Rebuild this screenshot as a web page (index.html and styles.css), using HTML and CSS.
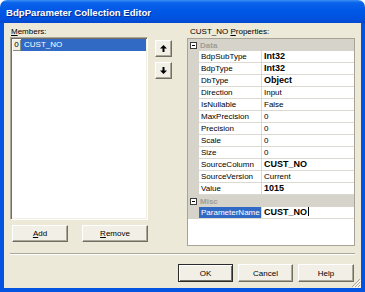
FILE: index.html
```html
<!DOCTYPE html>
<html lang="en">
  <head>
    <meta charset="UTF-8" />
    <meta name="viewport" content="width=device-width, initial-scale=1" />
    <title>BdpParameter Collection Editor</title>
    <link rel="stylesheet" href="styles.css">
  </head>
  <body>
    <div class="window">
      <div class="titlebar">BdpParameter Collection Editor</div>

      <div class="client">
        <div class="main">
          <!-- Members list -->
          <div class="members">
            <label class="caption"><u>M</u>embers:</label>
            <div class="listbox">
              <div class="list-item">
                <span class="idx">0</span>
                <span class="item-text">CUST_NO</span>
              </div>
            </div>
            <div class="list-buttons">
              <button class="btn btn-add"><u>A</u>dd</button>
              <button class="btn btn-remove"><u>R</u>emove</button>
            </div>
          </div>

          <!-- Move up / down -->
          <div class="move-buttons">
            <button class="btn btn-arrow">
              <svg width="7" height="7" viewBox="0 0 7 7">
                <path d="M3.5 0 L7 3.5 L4.5 3.5 L4.5 7 L2.5 7 L2.5 3.5 L0 3.5 Z" fill="#000" />
              </svg>
            </button>
            <button class="btn btn-arrow">
              <svg width="7" height="7" viewBox="0 0 7 7">
                <path d="M3.5 7 L7 3.5 L4.5 3.5 L4.5 0 L2.5 0 L2.5 3.5 L0 3.5 Z" fill="#000" />
              </svg>
            </button>
          </div>

          <!-- Property grid -->
          <div class="props">
            <label class="caption props-caption">CUST_NO <u>P</u>roperties:</label>
            <div class="propgrid">
              <div class="category"><span class="toggle"></span><span class="cat-name">Data</span></div>
              <div class="prop"><span class="margin"></span><span class="name">BdpSubType</span><span class="value bold">Int32</span></div>
              <div class="prop"><span class="margin"></span><span class="name">BdpType</span><span class="value bold">Int32</span></div>
              <div class="prop"><span class="margin"></span><span class="name">DbType</span><span class="value bold">Object</span></div>
              <div class="prop"><span class="margin"></span><span class="name">Direction</span><span class="value">Input</span></div>
              <div class="prop"><span class="margin"></span><span class="name">IsNullable</span><span class="value">False</span></div>
              <div class="prop"><span class="margin"></span><span class="name">MaxPrecision</span><span class="value">0</span></div>
              <div class="prop"><span class="margin"></span><span class="name">Precision</span><span class="value">0</span></div>
              <div class="prop"><span class="margin"></span><span class="name">Scale</span><span class="value">0</span></div>
              <div class="prop"><span class="margin"></span><span class="name">Size</span><span class="value">0</span></div>
              <div class="prop"><span class="margin"></span><span class="name">SourceColumn</span><span class="value bold">CUST_NO</span></div>
              <div class="prop"><span class="margin"></span><span class="name">SourceVersion</span><span class="value">Current</span></div>
              <div class="prop"><span class="margin"></span><span class="name">Value</span><span class="value bold">1015</span></div>
              <div class="category"><span class="toggle"></span><span class="cat-name">Misc</span></div>
              <div class="prop"><span class="margin"></span><span class="name selected">ParameterName</span><span class="value bold">CUST_NO<span class="caret"></span></span></div>
            </div>
          </div>
        </div>

        <div class="separator"></div>

        <div class="dialog-buttons">
          <button class="btn btn-default">OK</button>
          <button class="btn">Cancel</button>
          <button class="btn btn-help">Help</button>
        </div>

        <!-- Resize grip -->
        <svg class="grip" width="10" height="10" viewBox="0 0 10 10">
          <path d="M9 1 L1 9 M9 4 L4 9 M9 7 L7 9" stroke="#ACA899" stroke-width="1" />
          <path d="M10 2 L2 10 M10 5 L5 10 M10 8 L8 10" stroke="#fff" stroke-width="1" />
        </svg>
      </div>
    </div>
  </body>
</html>
```

FILE: styles.css
```css
/* Global */
body {
  margin: 0;
  background-color: #ffffff;
  font-family: "Liberation Sans", Arial, sans-serif;
  font-size: 8px;
  color: #000;
}

u {
  text-decoration: underline;
}

/* Window frame */
.window {
  width: 365px;
  height: 292px;
  display: flex;
  flex-direction: column;
}

.titlebar {
  height: 20px;
  padding: 3px 0 0 6px;
  line-height: 20px;
  border-radius: 7px 7px 0 0;
  background: linear-gradient(
    to bottom,
    #3d8ff6 0%,
    #0a63ea 12%,
    #0058e6 45%,
    #0052df 80%,
    #0448cf 100%
  );
  color: #fff;
  font-weight: bold;
  font-size: 9.6px;
  text-shadow: 1px 1px 0 #0b2d8f;
}

.client {
  position: relative;
  flex: 1;
  display: flex;
  flex-direction: column;
  padding: 4px 6px 6px 6px;
  background-color: #ece9d8;
  border: 4px solid #0553e1;
  border-top: none;
}

.main {
  display: flex;
  height: 219px;
}

.caption {
  display: block;
  height: 10px;
  line-height: 10px;
  padding-left: 1px;
}

/* Members */
.members {
  width: 138px;
  display: flex;
  flex-direction: column;
}

.listbox {
  height: 183px;
  box-sizing: border-box;
  background-color: #fff;
  border: 1px solid;
  border-color: #aca899 #fff #fff #aca899;
  box-shadow: inset 1px 1px 0 #716f64, inset -1px -1px 0 #f1efe2;
  padding: 1px;
}

.list-item {
  display: flex;
  height: 12px;
  line-height: 12px;
}

.idx {
  width: 9px;
  text-align: center;
  background-color: #f1efe2;
  box-shadow: inset 1px 1px 0 #fff, inset -1px -1px 0 #8c8a7e;
}

.item-text {
  flex: 1;
  padding-left: 3px;
  background-color: #316ac5;
  color: #fff;
}

.list-buttons {
  display: flex;
  justify-content: space-between;
  margin-top: 5px;
  padding-left: 2px;
}

/* Buttons */
.btn {
  box-sizing: border-box;
  height: 17px;
  padding: 0;
  font-family: "Liberation Sans", Arial, sans-serif;
  font-size: 8px;
  color: #000;
  background-color: #f2f0e6;
  border: 1px solid;
  border-color: #fff #716f64 #716f64 #fff;
  box-shadow: inset -1px -1px 0 #aca899;
}

.btn-add {
  width: 56px;
}

.btn-remove {
  width: 66px;
}

.move-buttons {
  display: flex;
  flex-direction: column;
  gap: 5px;
  width: 17px;
  margin-left: 7px;
  padding-top: 13px;
}

.btn-arrow {
  width: 17px;
  display: flex;
  align-items: center;
  justify-content: center;
}

/* Property grid */
.props {
  width: 168px;
  margin-left: 15px;
  display: flex;
  flex-direction: column;
}

.props-caption {
  padding-left: 3px;
}

.propgrid {
  margin-top: 1px;
  height: 208px;
  box-sizing: border-box;
  background-color: #fff;
  border: 1px solid #a7a497;
}

.category {
  display: flex;
  align-items: center;
  height: 12px;
  background-color: #d6d3ca;
}

.toggle {
  position: relative;
  box-sizing: border-box;
  width: 7px;
  height: 7px;
  margin: 0 2px 0 2px;
  border: 1px solid #3c3c3c;
  background-color: #fff;
}

.toggle::after {
  content: "";
  position: absolute;
  left: 1px;
  top: 2px;
  width: 3px;
  height: 1px;
  background-color: #000;
}

.cat-name {
  padding-left: 1px;
  font-weight: bold;
  color: #a19e94;
}

.prop {
  display: grid;
  grid-template-columns: 11px 63px 1fr;
  height: 12px;
  line-height: 11px;
}

.margin {
  background-color: #d6d3ca;
}

.name,
.value {
  padding-left: 2px;
  border-bottom: 1px solid #dcd9d0;
  white-space: nowrap;
  overflow: hidden;
}

.name {
  border-right: 1px solid #dcd9d0;
}

.name.selected {
  background-color: #316ac5;
  color: #fff;
}

.value.bold {
  font-weight: bold;
  font-size: 9px;
}

.caret {
  display: inline-block;
  width: 1px;
  height: 9px;
  margin-left: 1px;
  vertical-align: -1px;
  background-color: #000;
}

/* Bottom */
.separator {
  margin-top: 7px;
  border-top: 1px solid #aca899;
  border-bottom: 1px solid #fff;
}

.dialog-buttons {
  display: flex;
  justify-content: flex-end;
  gap: 5px;
  margin-top: 9px;
  margin-right: 1px;
}

.dialog-buttons .btn {
  width: 55px;
  height: 18px;
}

.dialog-buttons .btn-help {
  width: 56px;
}

.btn-default {
  border: 1px solid #2b2b2b;
  box-shadow: inset 1px 1px 0 #fff, inset -1px -1px 0 #716f64;
}

.grip {
  position: absolute;
  right: 0;
  bottom: 0;
}
```
